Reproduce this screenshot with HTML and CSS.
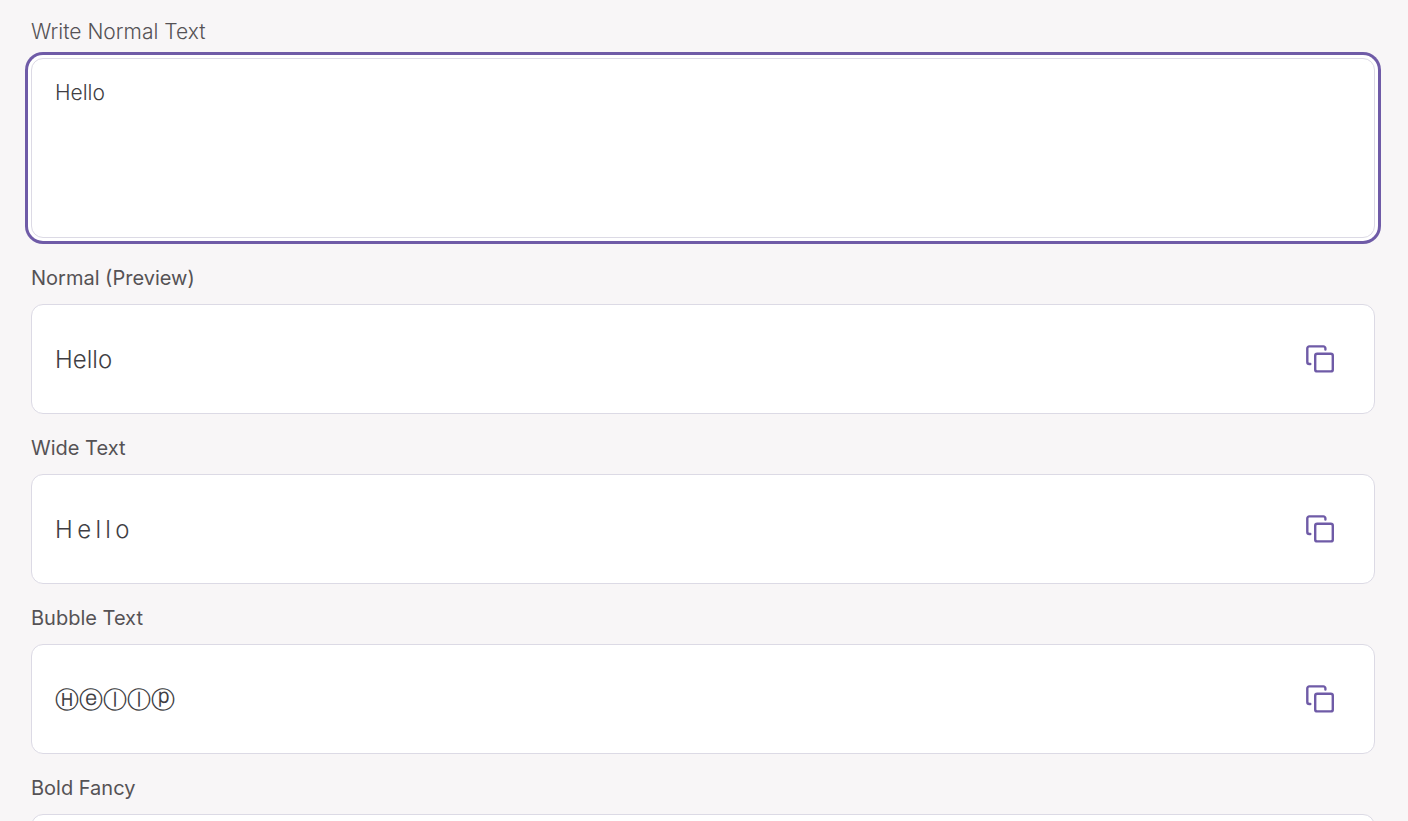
FILE: index.html
```html
<!DOCTYPE html>
<html lang="en">
<head>
    <meta charset="UTF-8">
    <meta name="viewport" content="width=device-width, initial-scale=1.0">
    <title>Fancy Text Generator</title>
    <link rel="stylesheet" href="styles.css">
</head>
<body>
    <!-- copy icon shared by every result row -->
    <svg class="sprite" aria-hidden="true">
        <symbol id="copy-icon" viewBox="0 0 32 32">
            <rect x="11.2" y="10.8" width="17.6" height="17.6" rx="2"/>
            <path d="M21.4 6.5V5.4a2 2 0 0 0-2-2H5.3a2 2 0 0 0-2 2V19a2 2 0 0 0 2 2h1"/>
        </symbol>
    </svg>

    <main class="generator">
        <div class="field field-input">
            <label class="label" for="normal-text">Write Normal Text</label>
            <textarea id="normal-text" class="text-input" spellcheck="false">Hello</textarea>
        </div>

        <div class="field">
            <label class="label" for="preview">Normal (Preview)</label>
            <div class="result">
                <output id="preview" class="result-text">Hello</output>
                <button type="button" class="copy-btn" aria-label="Copy normal text"><svg><use href="#copy-icon"/></svg></button>
            </div>
        </div>

        <div class="field">
            <label class="label" for="wide">Wide Text</label>
            <div class="result">
                <output id="wide" class="result-text">H&thinsp;e&thinsp;l&thinsp;l&thinsp;o</output>
                <button type="button" class="copy-btn" aria-label="Copy wide text"><svg><use href="#copy-icon"/></svg></button>
            </div>
        </div>

        <div class="field">
            <label class="label" for="bubble">Bubble Text</label>
            <div class="result">
                <output id="bubble" class="result-text bubble">Ⓗⓔⓛⓛⓟ</output>
                <button type="button" class="copy-btn" aria-label="Copy bubble text"><svg><use href="#copy-icon"/></svg></button>
            </div>
        </div>

        <div class="field">
            <label class="label" for="bold-fancy">Bold Fancy</label>
            <div class="result">
                <output id="bold-fancy" class="result-text"></output>
                <button type="button" class="copy-btn" aria-label="Copy bold fancy text"><svg><use href="#copy-icon"/></svg></button>
            </div>
        </div>
    </main>
</body>
</html>
```
FILE: styles.css
```css
* {
    box-sizing: border-box;
}

body {
    margin: 0;
    background-color: #f8f6f7;
    color: #403e43;
    font-family: Inter, "Open Sans", sans-serif;
    font-weight: 300;
}

.sprite {
    display: none;
}

.generator {
    padding: 17px 33px 0 31px;
}

.field {
    margin-bottom: 19px;
}

.field-input {
    margin-bottom: 25px;
}

.label {
    display: block;
    margin-bottom: 11px;
    color: #555255;
    font-size: 20px;
    font-weight: 400;
    line-height: 30px;
}

.field-input .label {
    font-size: 21px;
    font-weight: 300;
}

/* input box with the purple focus ring */
.text-input {
    display: block;
    width: 100%;
    height: 180px;
    padding: 19px 23px;
    border: 1px solid #dcdae5;
    border-radius: 12px;
    outline: none;
    box-shadow: 0 0 0 3px #fff, 0 0 0 6px #6f5ba7;
    background: #fff;
    color: inherit;
    font: inherit;
    font-size: 21px;
    line-height: 30px;
    resize: none;
}

/* result rows */
.result {
    display: flex;
    align-items: center;
    justify-content: space-between;
    height: 110px;
    padding: 0 38px 0 23px;
    border: 1px solid #dcdae5;
    border-radius: 12px;
    background: #fff;
}

.result-text {
    padding-top: 2px;
    font-size: 24px;
    line-height: 36px;
}

.bubble {
    font-family: "DejaVu Sans", sans-serif;
}

.copy-btn {
    padding: 0;
    border: none;
    background: none;
    cursor: pointer;
}

.copy-btn svg {
    display: block;
    width: 32px;
    height: 32px;
    fill: none;
    stroke: #6f5ba7;
    stroke-width: 2.4;
    stroke-linecap: round;
    stroke-linejoin: round;
}
```
